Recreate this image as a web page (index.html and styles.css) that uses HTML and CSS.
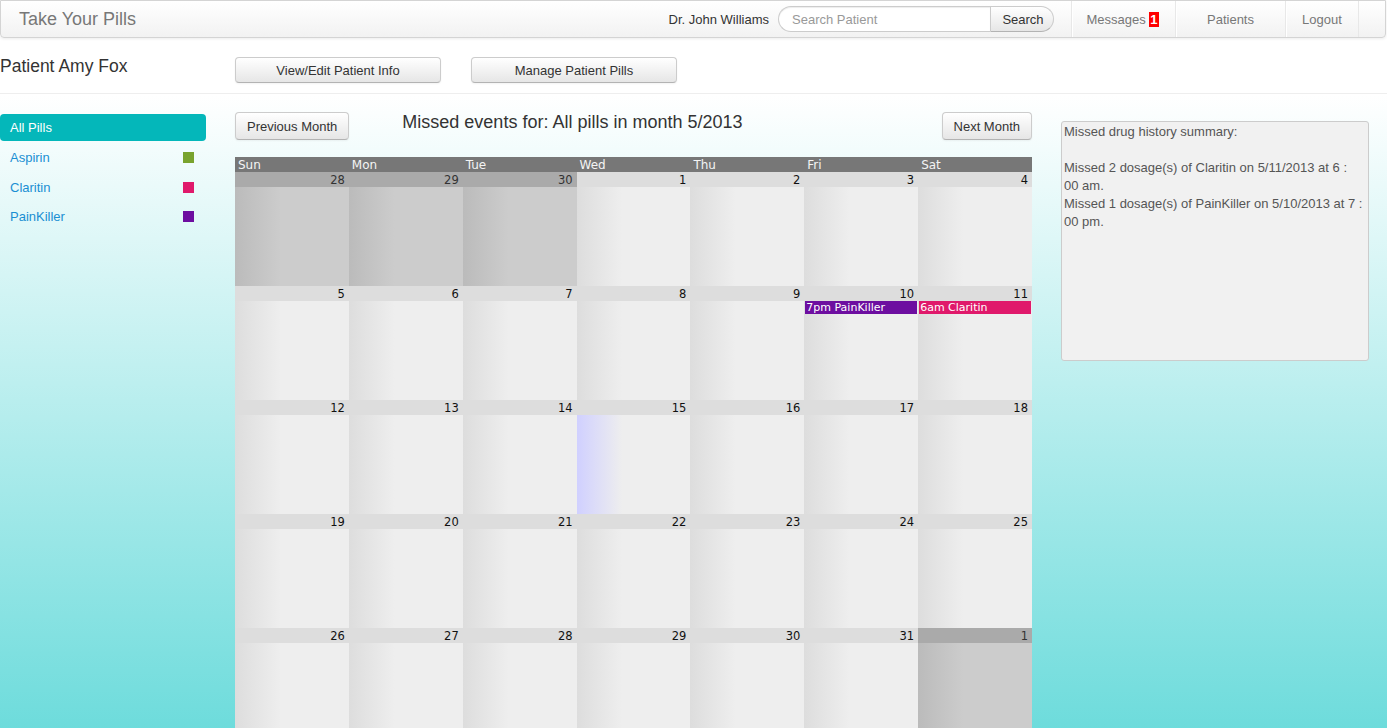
FILE: index.html
```html
<!DOCTYPE html>
<html lang="en">
<head>
  <meta charset="UTF-8">
  <title>Take Your Pills</title>
  <link rel="stylesheet" href="styles.css">
</head>
<body>

<div class="navbar">
  <a class="brand" href="#">Take Your Pills</a>
  <div class="nav-right">
    <span class="doctor">Dr. John Williams</span>
    <form class="search">
      <input type="text" class="search-query" placeholder="Search Patient">
      <button type="button" class="search-btn">Search</button>
    </form>
    <ul class="nav">
      <li class="nav-messages"><a href="#">Messages <span class="badge">1</span></a></li>
      <li class="nav-patients"><a href="#">Patients</a></li>
      <li class="nav-logout"><a href="#">Logout</a></li>
    </ul>
  </div>
</div>

<div class="page-header">
  <h4 class="patient-name">Patient Amy Fox</h4>
  <div class="header-actions">
    <button class="btn btn-wide">View/Edit Patient Info</button>
    <button class="btn btn-wide">Manage Patient Pills</button>
  </div>
</div>

<div class="content">
  <ul class="pill-list">
    <li class="active"><a href="#">All Pills</a></li>
    <li><a href="#">Aspirin</a><span class="swatch aspirin"></span></li>
    <li><a href="#">Claritin</a><span class="swatch claritin"></span></li>
    <li><a href="#">PainKiller</a><span class="swatch painkiller"></span></li>
  </ul>

  <div class="main">
    <div class="month-bar">
      <button class="btn">Previous Month</button>
      <h4 class="month-title">Missed events for: All pills in month 5/2013</h4>
      <button class="btn">Next Month</button>
    </div>

    <div class="calendar" id="calendar">
      <div class="dow">Sun</div>
      <div class="dow">Mon</div>
      <div class="dow">Tue</div>
      <div class="dow">Wed</div>
      <div class="dow">Thu</div>
      <div class="dow">Fri</div>
      <div class="dow">Sat</div>
    </div>
  </div>

  <div class="summary">
    Missed drug history summary:<br>
    <br>
    Missed 2 dosage(s) of Claritin on 5/11/2013 at 6 :<br>
    00 am.<br>
    Missed 1 dosage(s) of PainKiller on 5/10/2013 at 7 :<br>
    00 pm.
  </div>
</div>

<script>
  // build May 2013 grid (starts on Wednesday)
  const cal = document.getElementById('calendar');
  const events = {
    10: [{ text: '7pm PainKiller', cls: 'painkiller' }],
    11: [{ text: '6am Claritin', cls: 'claritin' }]
  };
  const today = 15;

  const days = [];
  [28, 29, 30].forEach(d => days.push({ day: d, other: true }));
  for (let d = 1; d <= 31; d++) days.push({ day: d, other: false });
  days.push({ day: 1, other: true });

  days.forEach(item => {
    const cell = document.createElement('div');
    cell.className = 'day' + (item.other ? ' other' : '') +
      (!item.other && item.day === today ? ' today' : '');

    const num = document.createElement('div');
    num.className = 'day-num';
    num.textContent = item.day;
    cell.appendChild(num);

    const body = document.createElement('div');
    body.className = 'day-body';
    if (!item.other && events[item.day]) {
      events[item.day].forEach(ev => {
        const e = document.createElement('div');
        e.className = 'event ' + ev.cls;
        e.textContent = ev.text;
        body.appendChild(e);
      });
    }
    cell.appendChild(body);
    cal.appendChild(cell);
  });
</script>

</body>
</html>
```

FILE: styles.css
```css
html {
  background: #66dada;
}

body {
  margin: 0;
  font-family: "Liberation Sans", Arial, sans-serif;
  font-size: 13px;
  color: #333;
  background: linear-gradient(#fff 0, #fff 95px, #66dada 760px) no-repeat;
  min-height: 800px;
}

a {
  text-decoration: none;
}

/* top navbar */
.navbar {
  display: flex;
  align-items: center;
  justify-content: space-between;
  height: 36px;
  margin-right: 1px;
  border: 1px solid #d4d4d4;
  border-radius: 0 0 4px 4px;
  background: linear-gradient(#ffffff, #f2f2f2);
  box-shadow: 0 1px 3px rgba(0, 0, 0, 0.08);
}

.brand {
  padding-left: 18px;
  font-size: 18px;
  color: #777;
}

.nav-right {
  display: flex;
  align-items: center;
  height: 100%;
}

.doctor {
  margin-right: 9px;
  color: #333;
}

.search {
  display: flex;
  margin: 0 17px 0 0;
}

.search-query {
  width: 198px;
  height: 24px;
  padding: 0 0 0 13px;
  border: 1px solid #ccc;
  border-right: none;
  border-radius: 14px 0 0 14px;
  font-family: "Liberation Sans", Arial, sans-serif;
  font-size: 13px;
  color: #555;
  box-shadow: inset 0 1px 1px rgba(0, 0, 0, 0.075);
}

.search-query::placeholder {
  color: #999;
}

.search-btn {
  width: 64px;
  height: 26px;
  padding: 0 0 0 2px;
  border: 1px solid #ccc;
  border-bottom-color: #b3b3b3;
  border-radius: 0 14px 14px 0;
  background: linear-gradient(#fff, #e6e6e6);
  font-family: "Liberation Sans", Arial, sans-serif;
  font-size: 13px;
  color: #333;
}

.nav {
  display: flex;
  height: 100%;
  margin: 0;
  padding: 0;
  list-style: none;
}

.nav li {
  display: flex;
  align-items: center;
  justify-content: center;
  border-left: 1px solid #e8e8e8;
  box-shadow: inset 1px 0 0 #fff;
}

.nav li:last-child {
  border-right: 1px solid #e8e8e8;
}

.nav a {
  color: #777;
}

.nav-messages {
  width: 101px;
  padding-right: 2px;
}

.nav-patients {
  width: 109px;
}

.nav-logout {
  width: 72px;
  margin-right: 26px;
}

.badge {
  display: inline-block;
  padding: 0 1px;
  background: #f00;
  color: #fff;
  font-weight: bold;
  line-height: 15px;
}

/* patient header */
.page-header {
  display: flex;
  align-items: flex-start;
  gap: 29px;
  height: 36px;
  padding-top: 19px;
  border-bottom: 1px solid #eee;
}

.patient-name {
  width: 206px;
  margin: -1px 0 0 0;
  font-size: 17.5px;
  font-weight: normal;
  line-height: 20px;
}

.header-actions {
  display: flex;
  gap: 30px;
}

.btn {
  height: 28px;
  padding: 0 11px;
  border: 1px solid #ccc;
  border-bottom-color: #b3b3b3;
  border-radius: 4px;
  background: linear-gradient(#ffffff, #e6e6e6);
  box-shadow: inset 0 1px 0 rgba(255, 255, 255, 0.2), 0 1px 2px rgba(0, 0, 0, 0.05);
  font-family: "Liberation Sans", Arial, sans-serif;
  font-size: 13px;
  color: #333;
}

.btn-wide {
  width: 206px;
  height: 26px;
}

/* content row */
.content {
  display: flex;
  align-items: flex-start;
  gap: 29px;
  padding-top: 18px;
}

.pill-list {
  width: 206px;
  margin: 2px 0 0 0;
  padding: 0;
  list-style: none;
}

.pill-list li {
  display: flex;
  align-items: center;
  justify-content: space-between;
  height: 29.5px;
  padding: 0 12px 0 10px;
}

.pill-list a {
  color: #1a8fd3;
}

.pill-list li.active {
  height: 27px;
  border-radius: 4px;
  background: #04b7ba;
  margin-bottom: 2px;
}

.pill-list li.active a {
  color: #fff;
}

.swatch {
  width: 11px;
  height: 11px;
}

.swatch.aspirin {
  background: #79a32e;
}

.swatch.claritin {
  background: #e0196b;
}

.swatch.painkiller {
  background: #6d0ea0;
}

.main {
  width: 797px;
}

.month-bar {
  display: flex;
  align-items: flex-start;
}

.month-title {
  flex: 1;
  margin: 0 0 0 53px;
  font-size: 18px;
  font-weight: normal;
  line-height: 20px;
}

/* calendar */
.calendar {
  display: grid;
  grid-template-columns: repeat(7, 1fr);
  margin-top: 17px;
  font-family: "DejaVu Sans", Verdana, sans-serif;
}

.dow {
  height: 15px;
  padding-left: 3px;
  background: #777;
  color: #f4f4f4;
  font-size: 12px;
  line-height: 16px;
}

.day {
  height: 114px;
}

.day-num {
  height: 15px;
  padding-right: 4px;
  background: #ddd;
  color: #111;
  font-size: 11.5px;
  line-height: 17px;
  text-align: right;
}

.day-body {
  height: 99px;
  background: linear-gradient(to right, #dddddd, #eeeeee 40%);
}

.day.other .day-num {
  background: #aaa;
  color: #333;
}

.day.other .day-body {
  background: linear-gradient(to right, #bbbbbb, #cccccc 40%);
}

.day.today .day-body {
  background: linear-gradient(to right, #d0d0ff, #eeeeee 40%);
}

.event {
  height: 13px;
  margin: 0 1px;
  padding-left: 1px;
  color: #fff;
  font-size: 11px;
  line-height: 14px;
  white-space: nowrap;
  overflow: hidden;
}

.event.painkiller {
  background: #6d0ea0;
}

.event.claritin {
  background: #e0196b;
}

/* summary box */
.summary {
  width: 302px;
  height: 236px;
  margin-top: 9px;
  padding: 1px 2px;
  border: 1px solid #ccc;
  border-radius: 3px;
  background: #f1f1f1;
  color: #555;
  line-height: 18px;
  white-space: nowrap;
}
```
